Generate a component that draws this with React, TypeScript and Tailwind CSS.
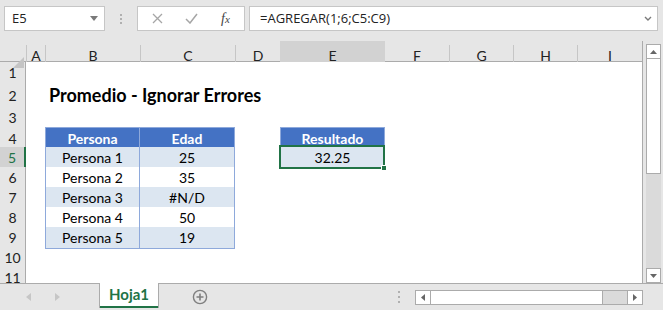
import React from "react";

const COLS = "grid grid-cols-[26px_19px_95px_95px_45px_105px_64px_64px_64px_65px]";

type Cell = { text?: string; cls?: string; sel?: boolean };

const HEAD = "bg-[#4472c4] text-white font-bold border-r border-b border-[#8ea9db]";
const LIGHT = "bg-[#dce6f1] border-r border-b border-[#8ea9db]";
const WHITE = "bg-white border-r border-b border-[#8ea9db]";

const letters = ["A", "B", "C", "D", "E", "F", "G", "H", "I"];

const rows: { n: number; h: string; cells: Record<string, Cell> }[] = [
    { n: 1, h: "h-[20px]", cells: {} },
    {
        n: 2,
        h: "h-[25px]",
        cells: {
            B: { text: "Promedio - Ignorar Errores", cls: "justify-start pl-[4px] font-bold text-[18px] whitespace-nowrap z-10" },
        },
    },
    { n: 3, h: "h-[20px]", cells: {} },
    {
        n: 4,
        h: "h-[20px]",
        cells: {
            B: { text: "Persona", cls: HEAD + " border-l border-t" },
            C: { text: "Edad", cls: HEAD + " border-t" },
            E: { text: "Resultado", cls: HEAD + " border-l border-t" },
        },
    },
    {
        n: 5,
        h: "h-[20px]",
        cells: {
            B: { text: "Persona 1", cls: LIGHT + " border-l" },
            C: { text: "25", cls: LIGHT },
            E: { text: "32.25", cls: LIGHT + " border-l", sel: true },
        },
    },
    {
        n: 6,
        h: "h-[20px]",
        cells: {
            B: { text: "Persona 2", cls: WHITE + " border-l" },
            C: { text: "35", cls: WHITE },
        },
    },
    {
        n: 7,
        h: "h-[20px]",
        cells: {
            B: { text: "Persona 3", cls: LIGHT + " border-l" },
            C: { text: "#N/D", cls: LIGHT },
        },
    },
    {
        n: 8,
        h: "h-[20px]",
        cells: {
            B: { text: "Persona 4", cls: WHITE + " border-l" },
            C: { text: "50", cls: WHITE },
        },
    },
    {
        n: 9,
        h: "h-[20px]",
        cells: {
            B: { text: "Persona 5", cls: LIGHT + " border-l" },
            C: { text: "19", cls: LIGHT },
        },
    },
    { n: 10, h: "h-[20px]", cells: {} },
    { n: 11, h: "h-[20px]", cells: {} },
];

function Toolbar() {
    return (
        <div className="h-[41px] flex items-start pt-[6px] pl-[4px] font-['Open_Sans',sans-serif] text-[13px] text-[#222]">
            <div className="w-[101px] h-[25px] bg-white border border-[#c6c6c6] flex items-center pl-[7px] pr-[6px]">
                <span className="flex-1">E5</span>
                <svg width="8" height="5" viewBox="0 0 8 5">
                    <path d="M0 0h8L4 5z" fill="#7a7a7a" />
                </svg>
            </div>
            <div className="w-[32px] h-[25px] flex flex-col items-center justify-center gap-[2px]">
                <span className="w-[2px] h-[2px] bg-[#b0b0b0]" />
                <span className="w-[2px] h-[2px] bg-[#b0b0b0]" />
                <span className="w-[2px] h-[2px] bg-[#b0b0b0]" />
            </div>
            <div className="w-[108px] h-[25px] bg-white border border-[#c6c6c6] flex items-center">
                <svg className="ml-[14px]" width="11" height="11" viewBox="0 0 11 11">
                    <path d="M1 1l9 9M10 1l-9 9" stroke="#a6a6a6" strokeWidth="1.3" />
                </svg>
                <svg className="ml-[22px]" width="13" height="11" viewBox="0 0 13 11">
                    <path d="M1 6l4 4 7-9" stroke="#a6a6a6" strokeWidth="1.5" fill="none" />
                </svg>
                <span className="ml-[23px] font-['Liberation_Serif',serif] italic text-[14px] text-[#444]">
                    f<span className="text-[11px]">x</span>
                </span>
            </div>
            <div className="ml-[4px] w-[409px] h-[25px] bg-white border border-[#c6c6c6] flex items-center pl-[10px] pr-[5px]">
                <span className="flex-1">=AGREGAR(1;6;C5:C9)</span>
                <svg width="8" height="6" viewBox="0 0 8 6">
                    <path d="M1 1l3 3 3-3" stroke="#7a7a7a" strokeWidth="1.4" fill="none" />
                </svg>
            </div>
        </div>
    );
}

function Sheet() {
    return (
        <div className="w-[643px] h-[242px] border-r border-[#ababab] overflow-hidden flex flex-col">
            <div className={`${COLS} h-[21px] shrink-0 border-b border-[#ababab] text-[14px] text-[#222]`}>
                <div className="relative">
                    <svg className="absolute right-[2px] bottom-[2px]" width="11" height="11" viewBox="0 0 11 11">
                        <path d="M11 0V11H0z" fill="#c4c4c4" />
                    </svg>
                </div>
                {letters.map((l, i) => (
                    <div
                        key={l}
                        className={
                            l === "E"
                                ? "bg-[#d2d2d2] border-b-2 border-[#217346] flex items-center justify-center pt-[2px]"
                                : "flex items-center justify-center border-l border-[#c6c6c6] mt-[4px] pb-[4px]" + (i === 5 ? " border-l-0" : "")
                        }
                    >
                        {l}
                    </div>
                ))}
            </div>
            {rows.map((r) => (
                <div key={r.n} className={`${COLS} ${r.h} shrink-0 bg-white`}>
                    <div
                        className={
                            r.n === 5
                                ? "bg-[#d2d2d2] text-[#217346] border-r-2 border-r-[#217346] border-b border-b-[#c6c6c6] flex items-center justify-center text-[14px]"
                                : "bg-[#e6e6e6] border-r border-r-[#ababab] border-b border-b-[#c6c6c6] flex items-center justify-center text-[14px] text-[#222]"
                        }
                    >
                        {r.n}
                    </div>
                    {letters.map((l) => {
                        const c = r.cells[l];
                        return (
                            <div
                                key={l}
                                className={`flex items-center justify-center relative text-[14px] ${c?.cls ?? ""}`}
                            >
                                {c?.text}
                                {c?.sel && (
                                    <>
                                        <div className="absolute -top-[2px] -left-[2px] -right-[1px] -bottom-[1px] border-2 border-[#217346]" />
                                        <div className="absolute -bottom-[3px] -right-[3px] w-[6px] h-[6px] bg-[#217346] border border-white" />
                                    </>
                                )}
                            </div>
                        );
                    })}
                </div>
            ))}
        </div>
    );
}

function VScroll() {
    return (
        <div className="ml-[3px] w-[15px] h-[242px] flex flex-col pt-[3px]">
            <div className="h-[15px] bg-white border border-[#ababab] flex items-center justify-center">
                <svg width="7" height="4" viewBox="0 0 7 4">
                    <path d="M0 4h7L3.5 0z" fill="#666" />
                </svg>
            </div>
            <div className="h-[115px] bg-white border-x border-b border-[#ababab]" />
            <div className="flex-1 bg-[#dadada]" />
            <div className="h-[15px] bg-white border border-[#ababab] flex items-center justify-center">
                <svg width="7" height="4" viewBox="0 0 7 4">
                    <path d="M0 0h7L3.5 4z" fill="#666" />
                </svg>
            </div>
        </div>
    );
}

function TabBar() {
    return (
        <div className="h-[27px] border-t border-[#ababab] flex items-start">
            <div className="w-[99px] h-[26px] flex items-center">
                <svg className="ml-[26px]" width="5" height="8" viewBox="0 0 5 8">
                    <path d="M5 0v8L0 4z" fill="#c6c6c6" />
                </svg>
                <svg className="ml-[24px]" width="5" height="8" viewBox="0 0 5 8">
                    <path d="M0 0v8l5-4z" fill="#c6c6c6" />
                </svg>
            </div>
            <div className="-mt-[1px] w-[60px] h-[25px] bg-white border-x border-[#ababab] flex flex-col items-center">
                <span className="flex-1 flex items-center text-[15px] font-bold text-[#217346]">Hoja1</span>
                <span className="w-full h-[2px] bg-[#217346]" />
            </div>
            <div className="w-[232px] h-[26px] flex items-center pl-[33px]">
                <svg width="16" height="16" viewBox="0 0 16 16">
                    <circle cx="8" cy="8" r="6.6" stroke="#7f7f7f" strokeWidth="1.4" fill="none" />
                    <path d="M8 4.5v7M4.5 8h7" stroke="#7f7f7f" strokeWidth="1.6" />
                </svg>
            </div>
            <div className="w-[16px] h-[26px] flex flex-col items-center justify-center gap-[3px]">
                <span className="w-[2px] h-[2px] bg-[#b0b0b0]" />
                <span className="w-[2px] h-[2px] bg-[#b0b0b0]" />
                <span className="w-[2px] h-[2px] bg-[#b0b0b0]" />
            </div>
            <div className="ml-[8px] mt-[6px] w-[228px] h-[15px] flex border border-[#ababab] bg-white">
                <div className="w-[15px] border-r border-[#ababab] flex items-center justify-center">
                    <svg width="4" height="7" viewBox="0 0 4 7">
                        <path d="M4 0v7L0 3.5z" fill="#666" />
                    </svg>
                </div>
                <div className="w-[172px] border-r border-[#ababab]" />
                <div className="flex-1 bg-[#dadada]" />
                <div className="w-[15px] border-l border-[#ababab] flex items-center justify-center">
                    <svg width="4" height="7" viewBox="0 0 4 7">
                        <path d="M0 0v7l4-3.5z" fill="#666" />
                    </svg>
                </div>
            </div>
        </div>
    );
}

export default function App() {
    return (
        <div className="w-[663px] h-[310px] bg-[#e6e6e6] overflow-hidden flex flex-col font-['Lato',sans-serif] text-black">
            <Toolbar />
            <div className="flex h-[242px]">
                <Sheet />
                <VScroll />
            </div>
            <TabBar />
        </div>
    );
}
